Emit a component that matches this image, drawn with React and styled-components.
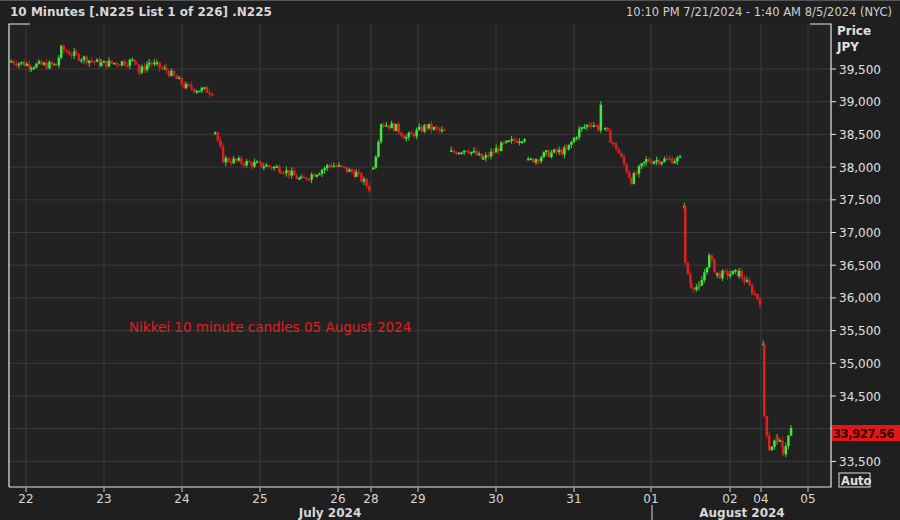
import React from "react";
import styled, { createGlobalStyle } from "styled-components";

const Global = createGlobalStyle`
  html, body { margin: 0; padding: 0; background: #1e1e1e; }
  body { font-family: Tahoma, "DejaVu Sans", "Liberation Sans", sans-serif; }
`;

const Frame = styled.div`
  width: 900px; height: 520px; display: flex; flex-direction: column;
  background: #1f1f1f; overflow: hidden; border-top: 1px solid #555;
  box-sizing: border-box;
`;
const Header = styled.div`
  height: 22px; display: flex; align-items: center; justify-content: space-between;
  padding: 0 8px 0 10px; color: #d8d8d8; font-size: 12px;
`;
const Title = styled.span` font-weight: bold; `;
const Range = styled.span` font-size: 11.5px; color: #d0d0d0; `;
const ChartBox = styled.div` flex: 1; position: relative; `;

const Y0 = 69, PX = 32.7 / 500;
const py = (p) => Y0 + (39500 - p) * PX;

const segments = [
  [[10,39620],[30,39560],[55,39560],[60,39800],[75,39700],[100,39580],[135,39620],[138,39450],[148,39600],[165,39480],[185,39220],[212,39150]],
  [[214,38550],[222,38120],[260,38030],[280,37980],[300,37800],[330,38040],[355,37900],[369,37660]],
  [[372,37980],[380,38680],[395,38600],[405,38450],[425,38620],[445,38520]],
  [[450,38220],[465,38280],[482,38120],[500,38320],[525,38480]],
  [[527,38080],[545,38200],[565,38250],[578,38560],[590,38680],[597,38600],[601,39150]],
  [[604,38550],[615,38300],[630,37800],[645,38100],[680,38120]],
  [[683,37450],[684,36500],[690,36200],[698,36150],[708,36620],[716,36350],[738,36380],[760,35920]],
  [[762,35250],[763,34200],[768,33700],[776,33850],[782,33650],[790,34000]],
];

let seed = 7;
const rnd = () => { seed = (seed * 9301 + 49297) % 233280; return seed / 233280; };

const candles = [];
segments.forEach((seg) => {
  let prev = null;
  for (let i = 0; i < seg.length - 1; i++) {
    const [x0, p0] = seg[i], [x1, p1] = seg[i + 1];
    const step = 2.6;
    for (let x = x0; x < x1 || (i === seg.length - 2 && x <= x1); x += step) {
      const t = (x - x0) / Math.max(1, x1 - x0);
      const base = p0 + (p1 - p0) * Math.min(1, t) + (rnd() - 0.5) * 120;
      const open = prev ?? base;
      const close = base;
      const hi = Math.max(open, close) + rnd() * 60;
      const lo = Math.min(open, close) - rnd() * 60;
      candles.push({ x, open, close, hi, lo });
      prev = close;
      if (x >= x1) break;
    }
  }
});

const vGrid = [26, 104, 182, 260, 338, 371, 418, 496, 574, 651, 730, 761, 808];
const days = ["22","23","24","25","26","28","29","30","31","01","02","04","05"];
const prices = [39500,39000,38500,38000,37500,37000,36500,36000,35500,35000,34500,34000,33500];
const fmt = (n) => n.toLocaleString("en-US");
const F = "Tahoma, DejaVu Sans, sans-serif";

export default function App() {
  return (
    <>
      <Global />
      <Frame>
        <Header>
          <Title>10 Minutes [.N225 List 1 of 226] .N225</Title>
          <Range>10:10 PM 7/21/2024 - 1:40 AM 8/5/2024 (NYC)</Range>
        </Header>
        <ChartBox>
          <svg width="900" height="497" viewBox="0 23 900 497" style={{ display: "block" }}>
            <rect x="9" y="24" width="822" height="463" fill="#222222" />
            {vGrid.map((x) => <line key={x} x1={x} x2={x} y1="24" y2="487" stroke="#3a3a3a" strokeWidth="1" />)}
            {prices.map((p) => <line key={p} x1="9" x2="831" y1={py(p)} y2={py(p)} stroke="#3a3a3a" strokeWidth="1" />)}
            {candles.map((c, i) => {
              const up = c.close >= c.open;
              const col = up ? "#3ee83a" : "#e01f1f";
              const top = py(Math.max(c.open, c.close)), bot = py(Math.min(c.open, c.close));
              return (
                <g key={i}>
                  <line x1={c.x + 1.2} x2={c.x + 1.2} y1={py(c.hi)} y2={py(c.lo)} stroke={col} strokeWidth="0.9" />
                  <rect x={c.x} y={top} width="2.5" height={Math.max(1.5, bot - top)} fill={col} />
                </g>
              );
            })}
            <polyline points="9,487 9,24 30,24" fill="none" stroke="#e8e8e8" strokeWidth="1.2" />
            <polyline points="9,487 831,487 831,24 810,24" fill="none" stroke="#e8e8e8" strokeWidth="1.2" />
            <text x="129" y="332" fill="#e21d1d" fontSize="13.5" fontFamily={F}>Nikkei 10 minute candles 05 August 2024</text>
            <text x="837" y="35" fill="#e0e0e0" fontSize="12" fontWeight="bold" fontFamily={F}>Price</text>
            <text x="837" y="51" fill="#e0e0e0" fontSize="12" fontWeight="bold" fontFamily={F}>JPY</text>
            {prices.map((p) => (
              <g key={p}>
                <line x1="831" x2="836" y1={py(p)} y2={py(p)} stroke="#e8e8e8" />
                {p !== 34000 && <text x="839" y={py(p) + 4.5} fill="#e0e0e0" fontSize="12" fontFamily={F}>{fmt(p)}</text>}
              </g>
            ))}
            <rect x="832" y="425" width="68" height="16" fill="#e01818" />
            <text x="833" y="437.5" fill="#3a0000" fontSize="11.5" fontWeight="bold" letterSpacing="-0.4" fontFamily={F}>33,927.56</text>
            <rect x="839" y="473" width="31" height="14" fill="none" stroke="#e0e0e0" />
            <text x="841" y="484.5" fill="#e0e0e0" fontSize="11.5" fontWeight="bold" fontFamily={F}>Auto</text>
            {vGrid.map((x, i) => (
              <g key={x}>
                <line x1={x} x2={x} y1="488" y2="492" stroke="#cfcfcf" />
                <text x={x} y="503" fill="#d8d8d8" fontSize="12" textAnchor="middle" fontFamily={F}>{days[i]}</text>
              </g>
            ))}
            <line x1="652" x2="652" y1="505" y2="520" stroke="#d8d8d8" />
            <text x="330" y="517" fill="#d8d8d8" fontSize="12" fontWeight="bold" textAnchor="middle" fontFamily={F}>July 2024</text>
            <text x="742" y="517" fill="#d8d8d8" fontSize="12" fontWeight="bold" textAnchor="middle" fontFamily={F}>August 2024</text>
          </svg>
        </ChartBox>
      </Frame>
    </>
  );
}
